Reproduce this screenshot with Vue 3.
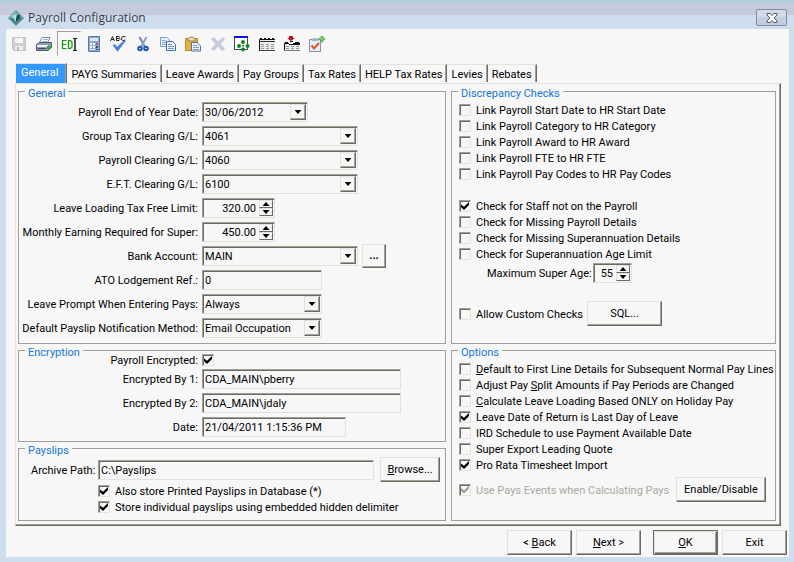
<script setup>
import { reactive, ref } from 'vue'

const tabs = ['General', 'PAYG Summaries', 'Leave Awards', 'Pay Groups', 'Tax Rates', 'HELP Tax Rates', 'Levies', 'Rebates']
const activeTab = ref('General')

const tools = ['Save', 'Print', 'Edit', 'Calculator', 'Spelling', 'Cut', 'Copy', 'Paste', 'Delete', 'Window', 'List', 'Insert', 'Tasks']

const general = reactive([
  { id: 'eoy', label: 'Payroll End of Year Date:', kind: 'date', size: 'date', value: '30/06/2012' },
  { id: 'tax', label: 'Group Tax Clearing G/L:', kind: 'select', size: 'wide', value: '4061' },
  { id: 'pay', label: 'Payroll Clearing G/L:', kind: 'select', size: 'wide', value: '4060' },
  { id: 'eft', label: 'E.F.T. Clearing G/L:', kind: 'select', size: 'wide', value: '6100' },
  { id: 'limit', label: 'Leave Loading Tax Free Limit:', kind: 'spin', size: 'spin', value: '320.00' },
  { id: 'super', label: 'Monthly Earning Required for Super:', kind: 'spin', size: 'spin', value: '450.00' },
  { id: 'bank', label: 'Bank Account:', kind: 'select', size: 'wide', value: 'MAIN', more: true },
  { id: 'ato', label: 'ATO Lodgement Ref.:', kind: 'text', size: 'mid', value: '0' },
  { id: 'prompt', label: 'Leave Prompt When Entering Pays:', kind: 'select', size: 'mid', value: 'Always' },
  { id: 'notify', label: 'Default Payslip Notification Method:', kind: 'select', size: 'mid', value: 'Email Occupation' }
])

const encryption = reactive([
  { id: 'enc1', label: 'Encrypted By 1:', size: 'long', value: 'CDA_MAIN\\pberry' },
  { id: 'enc2', label: 'Encrypted By 2:', size: 'long', value: 'CDA_MAIN\\jdaly' },
  { id: 'encdate', label: 'Date:', size: 'stamp', value: '21/04/2011 1:15:36 PM' }
])
const encrypted = ref(true)

const archivePath = ref('C:\\Payslips')
const payslips = reactive([
  { text: 'Also store Printed Payslips in Database (*)', on: true },
  { text: 'Store individual payslips using embedded hidden delimiter', on: true }
])

const links = reactive([
  { text: 'Link Payroll Start Date to HR Start Date', on: false },
  { text: 'Link Payroll Category to HR Category', on: false },
  { text: 'Link Payroll Award to HR Award', on: false },
  { text: 'Link Payroll FTE to HR FTE', on: false },
  { text: 'Link Payroll Pay Codes to HR Pay Codes', on: false }
])
const checks = reactive([
  { text: 'Check for Staff not on the Payroll', on: true },
  { text: 'Check for Missing Payroll Details', on: false },
  { text: 'Check for Missing Superannuation Details', on: false },
  { text: 'Check for Superannuation Age Limit', on: false }
])
const maxAge = ref('55')
const custom = ref(false)

const options = reactive([
  { pre: '', key: 'D', text: 'efault to First Line Details for Subsequent Normal Pay Lines', on: false },
  { pre: 'Adjust Pay ', key: 'S', text: 'plit Amounts if Pay Periods are Changed', on: false },
  { pre: '', key: 'C', text: 'alculate Leave Loading Based ONLY on Holiday Pay', on: false },
  { pre: '', key: '', text: 'Leave Date of Return is Last Day of Leave', on: true },
  { pre: '', key: '', text: 'IRD Schedule to use Payment Available Date', on: false },
  { pre: '', key: '', text: 'Super Export Leading Quote', on: false },
  { pre: '', key: '', text: 'Pro Rata Timesheet Import', on: true }
])
const events = ref(true)

function step(row, by) {
  row.value = (parseFloat(row.value) + by).toFixed(2)
}
</script>

<template>
  <div class="window">
    <header class="titlebar">
      <svg class="logo" viewBox="0 0 16 16" width="16" height="16" aria-hidden="true">
        <path d="M8 0 16 8 8 16 0 8Z" fill="#5d8f92" />
        <path d="M8 1 8 8 1 8Z" fill="#7fbdb8" />
        <path d="M8 1 15 8 8 8Z" fill="#69aaa6" />
        <path d="M4 5 12 5 8 12Z" fill="#b5e3db" />
        <path d="M9 5 12 5 12 9 8 12 8 8Z" fill="#164e54" />
        <path d="M1 8 8 15 8 12 4 8Z" fill="#3d8b89" />
        <path d="M15 8 8 15 8 12 12 8Z" fill="#4b8587" />
      </svg>
      <h1>Payroll Configuration</h1>
      <button class="close" type="button" aria-label="Close">
        <svg viewBox="0 0 12 10" width="12" height="10">
          <path d="M1 .5H4.2L6 2.6 7.8.5H11V2L8.2 5 11 8V9.5H7.8L6 7.4 4.2 9.5H1V8L3.8 5 1 2Z" fill="#fff" stroke="#4d5565" />
        </svg>
      </button>
    </header>

    <main class="client">
      <div class="toolbar" role="toolbar" aria-label="Actions">
        <button v-for="t in tools" :key="t" type="button" :class="{ pressed: t === 'Edit' }" :aria-label="t">
          <svg viewBox="0 0 16 16" width="16" height="16">
            <g v-if="t === 'Save'">
              <path d="M1 1H15V15H3L1 13Z" fill="#cfcfcf" />
              <path d="M4 1H12V7H4Z" fill="#f7f7f7" />
              <path d="M4 10H12V15H4Z" fill="#efefef" />
              <path d="M6 11H8V15H6Z" fill="#b5b5b5" />
              <path d="M1.500 1.500H14.500V14.500H3.500L1.500 12.500Z" fill="none" stroke="#c4c4c4" />
            </g>
            <g v-else-if="t === 'Print'">
              <path d="M6 1.500H14L11 8H3Z" fill="#fff" stroke="#7289b0" />
              <path d="M7 3.500H12M6 5.500H11" stroke="#9db4d6" />
              <path d="M.500 8.500 3.500 6.500H15.500V11.500L12 14.500H.500Z" fill="#8e9bb0" stroke="#4b576b" />
              <path d="M1 9H12V11H1Z" fill="#eef1f6" />
              <path d="M2 12H10V13H2Z" fill="#39455c" />
              <path d="M11 10H15V13H11Z" fill="#2fa84a" />
            </g>
            <g v-else-if="t === 'Edit'">
              <path d="M1.500 4V13M1 4.500H5.500M1 8.500H5M1 12.500H5.500M7.500 4V13M7 4.500H9.500L11 6V11L9.500 12.500H7" fill="none" stroke="#08a008" stroke-width="1.200" />
              <path d="M12 2.500H16M12 14.500H16" stroke="#222" fill="none" />
              <path d="M14 2V15" stroke="#222" stroke-width="1.500" />
            </g>
            <g v-else-if="t === 'Calculator'">
              <path d="M2.500.500H13.500V15.500H2.500Z" fill="#8ea8d4" stroke="#5f78a8" />
              <path d="M4 2H12V5H4Z" fill="#d4ecff" />
              <path d="M4 7H6V9H4ZM7 7H9V9H7ZM4 10H6V12H4ZM7 10H9V12H7ZM4 13H6V14H4ZM7 13H9V14H7Z" fill="#fff" />
              <path d="M10 7H12V9H10Z" fill="#d54a4a" />
              <path d="M10 10H12V12H10ZM10 13H12V14H10Z" fill="#2f4f94" />
            </g>
            <g v-else-if="t === 'Spelling'">
              <path d="M.500 5 2.500 .500 4.500 5M1.500 3.500H4M6.500 0V4.500H9L10 3.500 9 2.500H6.500M6.500.500H9L9.500 1.500 9 2.500M15.500 1 14 .500H12.500L11.500 2V3L12.500 4.500H14L15.500 4" fill="none" stroke="#222" />
              <path d="M3 9.500 4.500 8 7 11 13.500 5H15.500L7.500 15.500Z" fill="#4a7fd6" stroke="#6e97dd" stroke-width=".5" />
            </g>
            <g v-else-if="t === 'Cut'">
              <path d="M4.500 1 10 11" stroke="#6e89b4" stroke-width="2" />
              <path d="M11.500 1 6 11" stroke="#8ba2c6" stroke-width="2" />
              <circle cx="5" cy="12.500" r="1.800" fill="none" stroke="#2256b3" stroke-width="2" />
              <circle cx="11" cy="12.500" r="1.800" fill="none" stroke="#2256b3" stroke-width="2" />
            </g>
            <g v-else-if="t === 'Copy'">
              <path d="M.500 1.500H7L9.500 4V10.500H.500Z" fill="#eaf2ff" stroke="#7c9dd6" />
              <path d="M2 4.500H6M2 6.500H8M2 8.500H8" stroke="#7ea3dd" />
              <path d="M6.500 5.500H12.500L15.500 8.500V14.500H6.500Z" fill="#f4f8ff" stroke="#3f68b4" />
              <path d="M8 8.500H12M8 10.500H14M8 12.500H14" stroke="#6c93d4" />
            </g>
            <g v-else-if="t === 'Paste'">
              <path d="M.500 2.500H12.500V14.500H.500Z" fill="#e8b13c" stroke="#b78a2c" />
              <path d="M3 3.500 5 1H8L10 3.500V5H3Z" fill="#e6dfc8" stroke="#80704a" stroke-width=".8" />
              <path d="M6.500 6.500H12L15.500 10V15H6.500Z" fill="#e8f0fc" stroke="#5873a0" />
              <path d="M8 9.500H12M8 11.500H14M8 13.500H14" stroke="#86a0cc" />
            </g>
            <g v-else-if="t === 'Delete'">
              <path d="M1 3 4 1 8 5.500 13 1 15 3.500 10.500 8 15 13 12 15 8 10.500 4 15 1 13 5.500 8Z" fill="#c3ccda" />
            </g>
            <g v-else-if="t === 'Window'">
              <path d="M.500 2V13.500H13.500V2" fill="#fff" stroke="#444" />
              <path d="M0 0H14V2H0Z" fill="#0b12dc" />
              <g fill="#0b8a1c">
                <circle cx="9" cy="6" r="2" /><circle cx="5" cy="10" r="2" />
                <circle cx="13.500" cy="10" r="2" /><circle cx="9" cy="13.500" r="2" />
                <circle cx="9" cy="9.800" r="1" fill="#444" />
              </g>
            </g>
            <g v-else-if="t === 'List'">
              <path d="M0 3H16V14H0Z" fill="#ececec" />
              <path d="M.500 14V3.500H16" stroke="#111" fill="none" />
              <path d="M1 2.500H3M5 2.500H7M9 2.500H11M13 2.500H15" stroke="#111" />
              <path d="M1 5.500H16" stroke="#333" />
              <path d="M2 8.500H5M7 8.500H10M12 8.500H15M2 10.500H5M7 10.500H10M12 10.500H15M2 12.500H5M7 12.500H10M12 12.500H15" stroke="#999" />
              <path d="M0 14.500H16" stroke="#444" />
            </g>
            <g v-else-if="t === 'Insert'">
              <path d="M0 8H16V14H0Z" fill="#ececec" />
              <path d="M5 0H9V2H11L7 5 3 2H5Z" fill="#c60d18" />
              <path d="M.500 14V8M0 7.500H5M9 7.500H16M1 6.500H4M6 5.500H9M11 6.500H15M5 8.500H16" stroke="#111" fill="none" />
              <path d="M2 10.500H5M7 10.500H10M12 10.500H15M2 12.500H5M7 12.500H10M12 12.500H15" stroke="#999" />
              <path d="M0 14.500H16" stroke="#777" />
            </g>
            <g v-else>
              <path d="M.500 3.500H11.500V15.500H.500Z" fill="#e6eefa" stroke="#7d93b5" />
              <path d="M3 4 4 2H8L9 4V5H3Z" fill="#a5b2c7" />
              <path d="M2.500 9.500 5 12.500 10 7" fill="none" stroke="#e0542f" stroke-width="2" />
              <path d="M12 0H14V2H16V4H14V6H12V4H10V2H12Z" fill="#7ccb74" stroke="#3c9a40" stroke-width=".5" />
            </g>
          </svg>
        </button>
      </div>

      <nav class="tabs" role="tablist">
        <button
          v-for="t in tabs"
          :key="t"
          type="button"
          role="tab"
          :aria-selected="t === activeTab"
          :class="['tab', { active: t === activeTab }]"
          @click="activeTab = t"
        >{{ t }}</button>
      </nav>

      <div class="panel">
        <div class="column left">
          <fieldset class="group rows">
            <legend>General</legend>
            <div v-for="row in general" :key="row.id" class="row">
              <label :for="row.id">{{ row.label }}</label>
              <div v-if="row.kind === 'select'" :class="['field', row.size]">
                <select :id="row.id" v-model="row.value"><option>{{ row.value }}</option></select>
                <span class="drop" aria-hidden="true"><i class="down"></i></span>
              </div>
              <div v-else-if="row.kind === 'date'" :class="['field', row.size]">
                <input :id="row.id" v-model="row.value" type="text">
                <button class="drop" type="button" aria-label="Pick a date"><i class="down"></i></button>
              </div>
              <div v-else-if="row.kind === 'spin'" :class="['field', row.size]">
                <input :id="row.id" v-model="row.value" type="text" inputmode="decimal">
                <span class="stepper">
                  <button type="button" aria-label="Increase" @click="step(row, 1)"><i class="up"></i></button>
                  <button type="button" aria-label="Decrease" @click="step(row, -1)"><i class="down"></i></button>
                </span>
              </div>
              <div v-else :class="['field', row.size]">
                <input :id="row.id" v-model="row.value" type="text">
              </div>
              <button v-if="row.more" class="btn more" type="button" aria-label="Browse accounts">...</button>
            </div>
          </fieldset>

          <fieldset class="group encryption">
            <legend>Encryption</legend>
            <div class="row flag">
              <label for="encrypted">Payroll Encrypted:</label>
              <input id="encrypted" v-model="encrypted" type="checkbox">
            </div>
            <div class="stack">
              <div v-for="row in encryption" :key="row.id" class="row">
                <label :for="row.id">{{ row.label }}</label>
                <div :class="['field', row.size]"><input :id="row.id" v-model="row.value" type="text"></div>
              </div>
            </div>
          </fieldset>

          <fieldset class="group payslips">
            <legend>Payslips</legend>
            <div class="path">
              <label for="archive">Archive Path:</label>
              <div class="field"><input id="archive" v-model="archivePath" type="text"></div>
              <button class="btn browse" type="button"><u>B</u>rowse...</button>
            </div>
            <div class="indent">
              <label v-for="c in payslips" :key="c.text" class="check">
                <input v-model="c.on" type="checkbox"><span>{{ c.text }}</span>
              </label>
            </div>
          </fieldset>
        </div>

        <div class="column right">
          <fieldset class="group discrepancy">
            <legend>Discrepancy Checks</legend>
            <div class="list">
              <label v-for="c in links" :key="c.text" class="check">
                <input v-model="c.on" type="checkbox"><span>{{ c.text }}</span>
              </label>
            </div>
            <div>
              <label v-for="c in checks" :key="c.text" class="check">
                <input v-model="c.on" type="checkbox"><span>{{ c.text }}</span>
              </label>
              <div class="age">
                <label for="age">Maximum Super Age:</label>
                <div class="field small">
                  <input id="age" v-model="maxAge" type="text" inputmode="numeric">
                  <span class="stepper">
                    <button type="button" aria-label="Increase" @click="maxAge = String(+maxAge + 1)"><i class="up"></i></button>
                    <button type="button" aria-label="Decrease" @click="maxAge = String(+maxAge - 1)"><i class="down"></i></button>
                  </span>
                </div>
              </div>
            </div>
            <div class="custom">
              <label class="check"><input v-model="custom" type="checkbox"><span>Allow Custom Checks</span></label>
              <button class="btn sql" type="button">SQL...</button>
            </div>
          </fieldset>

          <fieldset class="group options">
            <legend>Options</legend>
            <div>
              <label v-for="c in options" :key="c.text" class="check">
                <input v-model="c.on" type="checkbox"><span>{{ c.pre }}<u v-if="c.key">{{ c.key }}</u>{{ c.text }}</span>
              </label>
            </div>
            <div class="events">
              <label class="check off"><input v-model="events" type="checkbox" disabled><span>Use Pays Events when Calculating Pays</span></label>
              <button class="btn enable" type="button">Enable/Disable</button>
            </div>
          </fieldset>
        </div>
      </div>

      <footer class="footer">
        <button class="btn" type="button">&lt; <u>B</u>ack</button>
        <button class="btn" type="button"><u>N</u>ext &gt;</button>
        <button class="btn default" type="button"><u>O</u>K</button>
        <button class="btn" type="button">Exit</button>
      </footer>
    </main>
  </div>
</template>

<style>
body {
  margin: 0;
  background: #cfdeee;
}
</style>

<style scoped>
.window,
.window * {
  box-sizing: border-box;
}

.window {
  --face: #f7f7f7;
  --light: #e3e3da;
  --mid: #a0a096;
  --dark: #6b6b64;
  min-height: 100vh;
  padding: 0 5px 5px 6px;
  display: flex;
  flex-direction: column;
  background: #cfdeee;
  color: #000;
  font: 11px/12px Roboto, 'Noto Sans', sans-serif;
}

button,
input,
select {
  margin: 0;
  padding: 0;
  border: 0;
  border-radius: 0;
  background: transparent;
  color: inherit;
  font: inherit;
  appearance: none;
}

.titlebar {
  height: 29px;
  margin: 0 -5px 0 -6px;
  padding: 6px 7px 0 8px;
  display: flex;
  align-items: center;
  gap: 4px;
  background: linear-gradient(#b2d0de 3px, #c5cbdc 3px, #c5cbdc 15px, #cfdeee 15px);
}

.titlebar h1 {
  flex: 1;
  margin: 0;
  color: #3c3c46;
  font: 12px/16px 'Open Sans', 'Noto Sans', sans-serif;
}

.close {
  width: 31px;
  height: 17px;
  display: grid;
  place-items: center;
  border: 1px solid #7f8ba3;
  border-radius: 2px;
  background: linear-gradient(#d6dae6 50%, #c3cfe0 50%);
}

.client {
  flex: 1;
  padding: 2px 2px 2px 1px;
  display: flex;
  flex-direction: column;
  background: var(--face);
}

.toolbar {
  width: 322px;
  height: 25px;
  display: grid;
  grid-template-columns: repeat(13, 1fr);
}

.toolbar button {
  display: grid;
  place-items: center;
  border: 1px solid transparent;
}

.toolbar .pressed {
  border-color: var(--mid) var(--face) var(--face) var(--mid);
}

.tabs {
  height: 27px;
  padding-left: 9px;
  display: flex;
  align-items: flex-end;
}

.tab {
  height: 18px;
  padding: 2px 4px 0;
  border-top: 1px solid var(--light);
  border-right: 1px solid var(--dark);
  box-shadow: inset -1px 0 var(--mid);
  margin-bottom: 1px;
}

.tab.active {
  height: 20px;
  margin-bottom: 0;
  padding: 0 8px 2px 5px;
  background: #3399ff;
  color: #fff;
}

.panel {
  margin: 0 6px 0 8px;
  padding: 7px 4px 4px 2px;
  display: grid;
  grid-template-columns: 428fr 325fr;
  gap: 5px;
  border: 1px solid;
  border-color: var(--light) var(--dark) var(--dark) var(--light);
  box-shadow: inset -1px -1px var(--mid);
}

.column {
  min-width: 0;
  display: flex;
  flex-direction: column;
  gap: 6px;
}

.group {
  position: relative;
  min-width: 0;
  margin: 0;
  padding: 0;
  border: 1px solid var(--mid);
}

.group legend {
  position: absolute;
  top: -4px;
  left: 6px;
  padding: 0 3px;
  background: var(--face);
  color: #1678d4;
}

.rows {
  padding: 10px 0 5px;
  display: grid;
  gap: 4px;
}

.row {
  height: 20px;
  display: grid;
  grid-template: 100% / 179px auto auto 1fr;
  align-items: center;
  column-gap: 4px;
  white-space: nowrap;
}

.row > label,
.path > label,
.age > label,
.check > span {
  padding-top: 2px;
}

.row > label {
  text-align: right;
}

.field {
  height: 20px;
  display: flex;
  border: 1px solid;
  border-color: var(--mid) var(--light) var(--light) var(--mid);
  box-shadow: inset 1px 1px var(--dark);
  padding: 1px;
}

.field input,
.field select {
  flex: 1;
  min-width: 0;
  width: 100%;
  padding: 2px 1px 0;
}

.field.date { width: 106px; }
.field.wide { width: 156px; }
.field.mid { width: 120px; }
.field.spin { width: 73px; }
.field.long { width: 199px; }
.field.stamp { width: 144px; }
.field.small { width: 39px; }

.field.spin input,
.field.small input {
  padding-right: 3px;
  text-align: right;
}

.drop,
.stepper button {
  display: grid;
  place-items: center;
  border: 1px solid;
  border-color: var(--light) var(--dark) var(--dark) var(--light);
  background: var(--face);
}

.drop {
  flex: none;
  width: 16px;
  box-shadow: inset -1px -1px var(--mid);
}

.stepper {
  flex: none;
  width: 14px;
  display: grid;
  grid-template-rows: 1fr 1fr;
}

.up,
.down {
  width: 7px;
  height: 4px;
  background: #000;
  clip-path: polygon(0 0, 100% 0, 50% 100%);
}

.up {
  clip-path: polygon(0 100%, 100% 100%, 50% 0);
}

.btn {
  width: 65px;
  height: 25px;
  border: 1px solid;
  border-color: var(--light) var(--dark) var(--dark) var(--light);
  box-shadow: inset -1px -1px var(--mid);
  white-space: nowrap;
}

.btn.more {
  width: 24px;
  height: 24px;
  font-weight: bold;
}

.btn.default {
  margin-left: 8px;
  border-color: var(--dark);
  box-shadow: inset 1px 1px var(--light), inset -1px -1px var(--dark), inset -2px -2px var(--mid);
}

.btn u {
  text-underline-offset: 1px;
}

input[type='checkbox'] {
  flex: none;
  width: 12px;
  height: 12px;
  border: 1px solid;
  border-color: var(--mid) var(--light) var(--light) var(--mid);
  box-shadow: inset 1px 1px var(--dark);
  display: grid;
  place-items: center;
}

input[type='checkbox']:checked::before {
  content: '';
  width: 8px;
  height: 8px;
  background: #000;
  clip-path: polygon(0 30%, 38% 60%, 100% 0, 100% 38%, 38% 100%, 0 65%);
}

input[type='checkbox']:disabled::before {
  background: var(--mid);
}

.check {
  height: 16px;
  display: flex;
  align-items: center;
  gap: 5px;
  white-space: nowrap;
}

.check.off {
  color: #a9a99f;
}

.encryption {
  padding: 3px 0 4px;
}

.row.flag {
  height: 12px;
  margin-bottom: 3px;
}

.stack {
  display: grid;
  gap: 4px;
}

.payslips {
  padding: 8px 5px 5px 12px;
}

.path {
  display: flex;
  align-items: center;
  gap: 6px;
}

.path label {
  width: 64px;
  margin-right: -3px;
  white-space: nowrap;
}

.path .field {
  flex: 1;
}

.btn.browse {
  width: 60px;
}

.indent {
  margin-top: 1px;
  padding-left: 67px;
}

.discrepancy {
  padding: 10px 7px 17px;
}

.list {
  margin-bottom: 16px;
}

.age {
  margin: 1px 0 18px;
  padding-left: 28px;
  display: flex;
  align-items: center;
  gap: 5px;
}

.age label {
  width: 101px;
  white-space: nowrap;
}

.custom,
.events {
  display: flex;
  align-items: center;
}

.custom .check {
  width: 128px;
}

.btn.sql {
  width: 75px;
}

.options {
  padding: 10px 7px 18px;
}

.events {
  margin-top: 4px;
}

.events .check {
  width: 217px;
}

.btn.enable {
  width: 90px;
}

.footer {
  margin-top: 4px;
  display: flex;
  justify-content: flex-end;
  gap: 4px;
}
</style>
